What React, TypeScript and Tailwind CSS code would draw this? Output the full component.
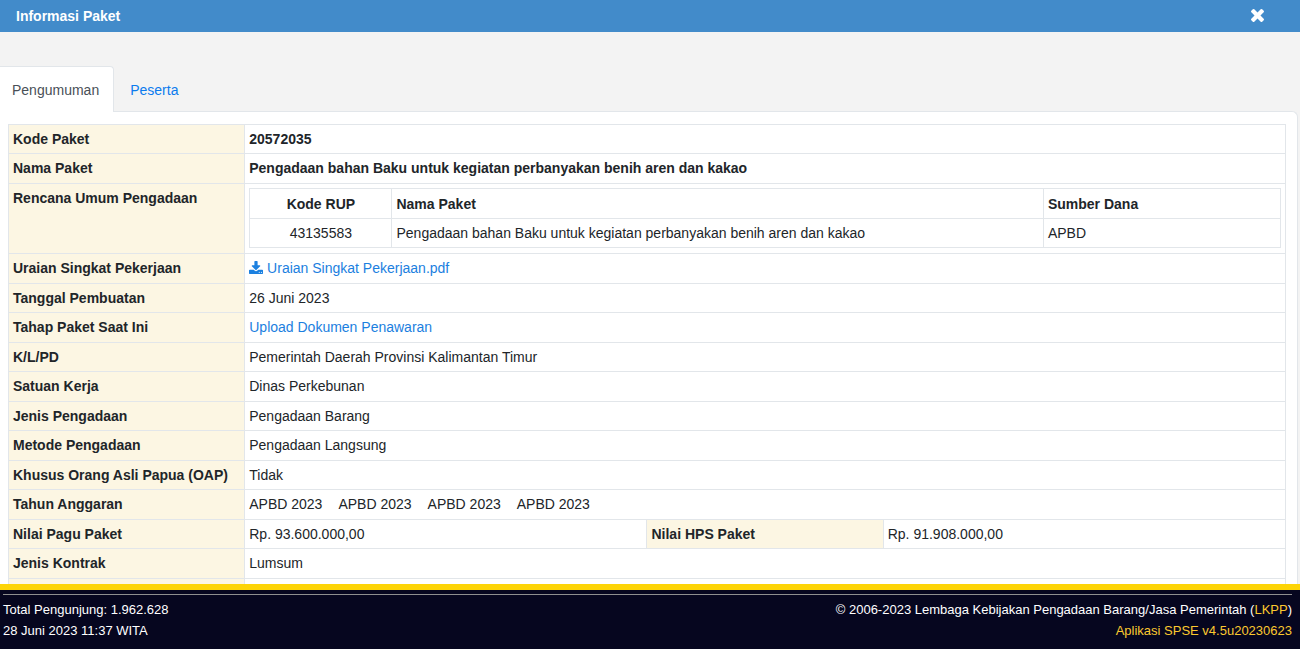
import type { ReactNode } from "react";

const rowHeights = "[&>tr]:h-[29px] [&>tr:nth-child(even)]:h-[30px]";
const th = "border border-[#e2e6ea] bg-[#fcf6e3] px-1 py-1 text-left align-top font-bold";
const td = "border border-[#e2e6ea] px-1 py-1 text-left align-top";
const link = "text-[#1b80e0] hover:underline";

function CloseIcon() {
  return (
    <svg viewBox="300 434 1192 1188" className="size-[13px]" fill="currentColor" aria-hidden="true">
      <path d="M1490 1322q0 40-28 68l-136 136q-28 28-68 28t-68-28l-294-294-294 294q-28 28-68 28t-68-28l-136-136q-28-28-28-68t28-68l294-294-294-294q-28-28-28-68t28-68l136-136q28-28 68-28t68 28l294 294 294-294q28-28 68-28t68 28l136 136q28 28 28 68t-28 68l-294 294 294 294q28 28 28 68z" transform="translate(0 66)" />
    </svg>
  );
}

function DownloadIcon() {
  return (
    <svg viewBox="64 0 1664 1536" className="mb-1 inline-block h-[13px] w-[14px]" fill="currentColor" aria-hidden="true">
      <path d="M1344 1344q0-26-19-45t-45-19-45 19-19 45 19 45 45 19 45-19 19-45zm256 0q0-26-19-45t-45-19-45 19-19 45 19 45 45 19 45-19 19-45zm128-224v320q0 40-28 68t-68 28h-1472q-40 0-68-28t-28-68v-320q0-40 28-68t68-28h465l135 136q58 56 136 56t136-56l136-136h464q40 0 68 28t28 68zm-325-569q17 41-14 70l-448 448q-18 19-45 19t-45-19l-448-448q-31-29-14-70 17-39 59-39h256v-448q0-26 19-45t45-19h256q26 0 45 19t19 45v448h256q42 0 59 39z" />
    </svg>
  );
}

function Row({ label, children }: { label: string; children: ReactNode }) {
  return (
    <tr>
      <th scope="row" className={th}>{label}</th>
      <td colSpan={3} className={td}>{children}</td>
    </tr>
  );
}

function RupTable() {
  return (
    <table className="mb-px w-full table-fixed border-collapse">
      <colgroup>
        <col className="w-[13.8%]" />
        <col className="w-[63.2%]" />
        <col className="w-[23%]" />
      </colgroup>
      <thead>
        <tr className="h-[30px]">
          <th className="border border-[#e2e6ea] px-1 text-center">Kode RUP</th>
          <th className="border border-[#e2e6ea] px-1 text-left">Nama Paket</th>
          <th className="border border-[#e2e6ea] px-1 text-left">Sumber Dana</th>
        </tr>
      </thead>
      <tbody>
        <tr className="h-[29px]">
          <td className="border border-[#e2e6ea] px-1 text-center">43135583</td>
          <td className="border border-[#e2e6ea] px-1">Pengadaan bahan Baku untuk kegiatan perbanyakan benih aren dan kakao</td>
          <td className="border border-[#e2e6ea] px-1">APBD</td>
        </tr>
      </tbody>
    </table>
  );
}

export default function App() {
  return (
    <div className="flex h-screen flex-col overflow-hidden bg-[#f3f3f3] font-['Liberation_Sans',Arial,sans-serif] text-[14px] leading-5 text-[#212529]">
      <header className="flex h-8 shrink-0 items-center justify-between bg-[#428bca] pr-9 pb-px pl-4 text-white">
        <h1 className="font-bold">Informasi Paket</h1>
        <button type="button" aria-label="Tutup">
          <CloseIcon />
        </button>
      </header>

      <main className="flex min-h-0 flex-1 flex-col overflow-hidden pt-[34px] pr-[2px]">
        <nav className="z-10 -mb-px flex shrink-0">
          <a href="#pengumuman" aria-current="page" className="flex h-[46px] items-center rounded-tr border-t border-r border-[#e2e6ea] bg-white pr-[14px] pl-3 text-[#495057]">
            Pengumuman
          </a>
          <a href="#peserta" className="flex h-[46px] items-center border-t border-transparent px-4 text-[#0b7bee]">
            Peserta
          </a>
        </nav>

        <section className="min-h-0 flex-1 overflow-hidden rounded-tr-md border-t border-r border-[#e2e6ea] bg-white pt-3 pr-[11px] pl-2">
          <table className="w-full table-fixed border-collapse">
            <colgroup>
              <col className="w-[18.5%]" />
              <col className="w-[31.5%]" />
              <col className="w-[18.5%]" />
              <col className="w-[31.5%]" />
            </colgroup>
            <tbody className={rowHeights}>
              <Row label="Kode Paket"><strong>20572035</strong></Row>
              <Row label="Nama Paket">
                <strong>Pengadaan bahan Baku untuk kegiatan perbanyakan benih aren dan kakao</strong>
              </Row>
              <Row label="Rencana Umum Pengadaan"><RupTable /></Row>
              <Row label="Uraian Singkat Pekerjaan">
                <a href="#uraian" className={link}>
                  <DownloadIcon /> Uraian Singkat Pekerjaan.pdf
                </a>
              </Row>
              <Row label="Tanggal Pembuatan">26 Juni 2023</Row>
              <Row label="Tahap Paket Saat Ini"><a href="#tahap" className={link}>Upload Dokumen Penawaran</a></Row>
              <Row label="K/L/PD">Pemerintah Daerah Provinsi Kalimantan Timur</Row>
              <Row label="Satuan Kerja">Dinas Perkebunan</Row>
              <Row label="Jenis Pengadaan">Pengadaan Barang</Row>
              <Row label="Metode Pengadaan">Pengadaan Langsung</Row>
              <Row label="Khusus Orang Asli Papua (OAP)">Tidak</Row>
              <Row label="Tahun Anggaran">
                <span className="flex gap-4">
                  <span>APBD 2023</span>
                  <span>APBD 2023</span>
                  <span>APBD 2023</span>
                  <span>APBD 2023</span>
                </span>
              </Row>
              <tr>
                <th scope="row" className={th}>Nilai Pagu Paket</th>
                <td className={td}>Rp. 93.600.000,00</td>
                <th scope="row" className={th}>Nilai HPS Paket</th>
                <td className={td}>Rp. 91.908.000,00</td>
              </tr>
              <Row label="Jenis Kontrak">Lumsum</Row>
              <Row label="">{null}</Row>
            </tbody>
          </table>
        </section>
      </main>

      <footer className="shrink-0 border-t-[6px] border-[#fdd406] bg-[#06061f] pt-1 pr-2 pb-2 pl-[3px] text-[13px] leading-[21px] text-white">
        <div className="flex justify-between border-t border-[#8f8f8f] pt-1">
          <div>
            <p>Total Pengunjung: 1.962.628</p>
            <p>28 Juni 2023 11:37 WITA</p>
          </div>
          <div className="text-right">
            <p>
              © 2006-2023 Lembaga Kebijakan Pengadaan Barang/Jasa Pemerintah (<a href="#lkpp" className="text-[#fcc92f]">LKPP</a>)
            </p>
            <p><a href="#spse" className="text-[#fcc92f]">Aplikasi SPSE v4.5u20230623</a></p>
          </div>
        </div>
      </footer>
    </div>
  );
}
